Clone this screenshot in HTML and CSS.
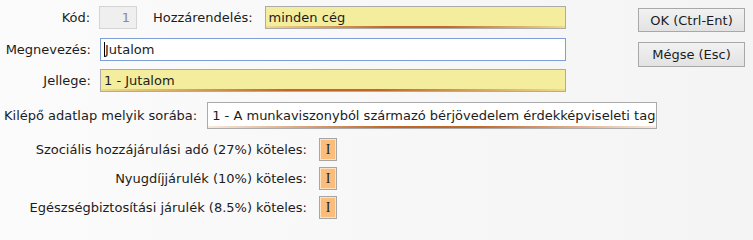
FILE: index.html
```html
<!DOCTYPE html>
<html lang="hu">
<head>
<meta charset="utf-8">
<title>Jutalom</title>
<link rel="stylesheet" href="styles.css">
</head>
<body>
<div class="page">
  <div class="top">
    <div class="fields">
      <div class="row r1">
        <span class="label">Kód:</span>
        <span class="code">1</span>
        <span class="label2">Hozzárendelés:</span>
        <span class="field yellow wide">minden cég</span>
      </div>
      <div class="row r2">
        <span class="label">Megnevezés:</span>
        <span class="field active full"><span class="caret"></span>Jutalom</span>
      </div>
      <div class="row r3">
        <span class="label">Jellege:</span>
        <span class="field yellow full">1 - Jutalom</span>
      </div>
    </div>
    <div class="buttons">
      <button class="btn">OK (Ctrl-Ent)</button>
      <button class="btn btn2">Mégse (Esc)</button>
    </div>
  </div>
  <div class="bottom">
    <div class="row r4">
      <span class="label4">Kilépő adatlap melyik sorába:</span>
      <span class="field plain sor">1 - A munkaviszonyból származó bérjövedelem érdekképviseleti tag</span>
    </div>
    <div class="row flag">
      <span class="flabel">Szociális hozzájárulási adó (27%) köteles:</span>
      <span class="box">I</span>
    </div>
    <div class="row flag">
      <span class="flabel">Nyugdíjjárulék (10%) köteles:</span>
      <span class="box">I</span>
    </div>
    <div class="row flag">
      <span class="flabel">Egészségbiztosítási járulék (8.5%) köteles:</span>
      <span class="box">I</span>
    </div>
  </div>
</div>
</body>
</html>
```

FILE: styles.css
```css
html, body {
  margin: 0;
  padding: 0;
}
body {
  width: 753px;
  height: 223px;
  overflow: hidden;
  background: linear-gradient(to right, #fbfbfb, #f4f4f4);
  font-family: "DejaVu Sans", Verdana, sans-serif;
  font-size: 13px;
  color: #1c1c1c;
}
.page {
  padding-top: 6px;
}
.top {
  display: flex;
}
.fields {
  width: 566px;
}
.row {
  display: flex;
  align-items: center;
}
.r2 { margin-top: 9px; }
.r3 { margin-top: 8px; }
.label {
  width: 91px;
  text-align: right;
  margin-right: 9px;
}
.code {
  box-sizing: border-box;
  width: 38px;
  height: 23px;
  line-height: 21px;
  border: 1px solid #d4d4d4;
  background: #efefef;
  color: #8a8a8a;
  text-align: right;
  padding-right: 6px;
}
.label2 {
  margin-left: 16px;
  margin-right: 12px;
}
.field {
  position: relative;
  box-sizing: border-box;
  height: 23px;
  line-height: 21px;
  padding-left: 3px;
  border: 1px solid #ababab;
  white-space: nowrap;
  overflow: hidden;
}
.yellow {
  background: #f4ed9e;
}
.yellow::after,
.plain::after {
  content: "";
  position: absolute;
  left: 0;
  right: 0;
  bottom: 0;
  height: 2px;
  background: linear-gradient(to right, rgba(200,110,40,0.15), #c0682a 40%, #c0682a 60%, rgba(200,110,40,0.15));
}
.wide { width: 304px; }
.full { width: 466px; }
.active {
  background: #fff;
  border-color: #7d9fd6;
}
.caret {
  display: inline-block;
  width: 1px;
  height: 15px;
  background: #000;
  vertical-align: -3px;
}
.buttons {
  display: flex;
  flex-direction: column;
  margin-left: 72px;
  padding-top: 2px;
}
.btn {
  box-sizing: border-box;
  width: 107px;
  height: 24px;
  padding: 0;
  font-family: "DejaVu Sans", Verdana, sans-serif;
  font-size: 13px;
  color: #1c1c1c;
  border: 1px solid #a8a8a8;
  background: linear-gradient(#f2f2f2, #e2e2e2);
  border-radius: 0;
}
.btn2 {
  margin-top: 10px;
  height: 25px;
}
.bottom {
  margin-top: 10px;
}
.label4 {
  margin-left: 4px;
  margin-right: 10px;
}
.plain {
  background: #fff;
  height: 27px;
  line-height: 25px;
  width: 450px;
  padding-left: 4px;
}
.flag {
  margin-top: 6px;
}
.r4 + .flag {
  margin-top: 9px;
}
.flabel {
  width: 307px;
  text-align: right;
  margin-right: 12px;
}
.box {
  box-sizing: border-box;
  width: 18px;
  height: 23px;
  line-height: 21px;
  text-align: center;
  border: 1px solid #a6a6a6;
  box-shadow: inset 0 0 0 1px #fde2c4;
  background: #fbbd7c;
  font-family: "Liberation Serif", serif;
  font-size: 14px;
  color: #222;
}
```
